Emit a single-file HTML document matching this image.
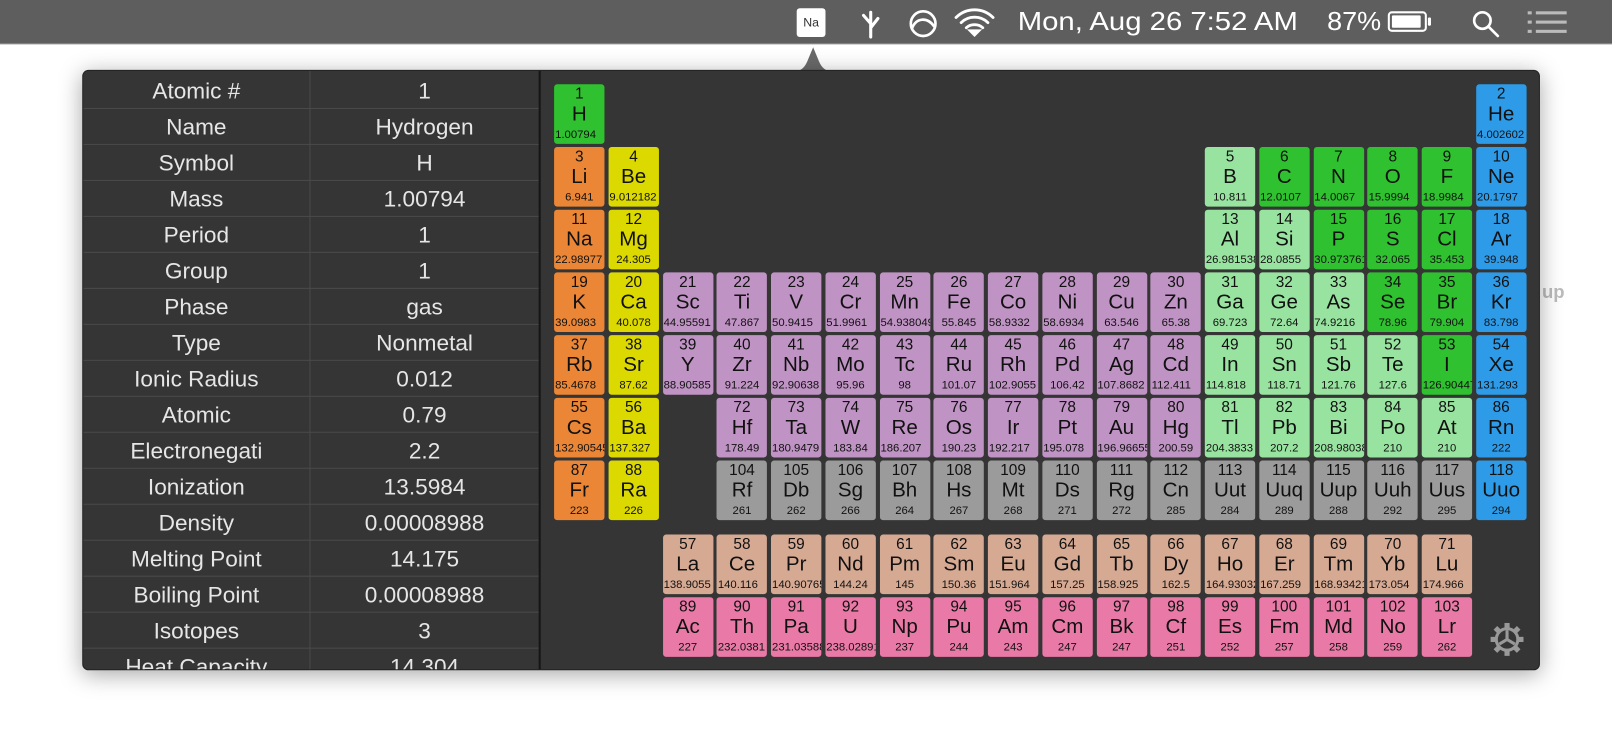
<!DOCTYPE html>
<html><head><meta charset="utf-8"><style>
*{margin:0;padding:0;box-sizing:border-box}
body{width:1612px;height:750px;background:#fff;position:relative;overflow:hidden;font-family:"Liberation Sans",sans-serif}
#wrap{position:absolute;left:0;top:0;width:1568px;height:730px;transform:scale(1.028);transform-origin:0 0}
#bar{position:absolute;left:0;top:0;width:1600px;height:43px;background:#5e5e5e;border-bottom:1px solid #8a8a8a;color:#fff}
#bar .t{position:absolute;top:7px;font-size:25px;white-space:nowrap;transform:scaleX(1.14);transform-origin:0 0}
#panel{position:absolute;left:80px;top:68px;width:1418px;height:584px;background:#353535;border-radius:6px;box-shadow:0 4px 22px rgba(0,0,0,.35);border:1px solid #222;overflow:hidden}
#arrow{position:absolute;left:766px;top:46px;width:50px;height:24px}
.row{position:absolute;left:0;width:443px;height:35px;border-bottom:1px solid #4a4a4a;color:#e6e6e6;font-size:22px}
.row span{position:absolute;top:5px;text-align:center}
.l{left:0;width:220px}.v{left:221px;width:222px}
#vdiv{position:absolute;left:220px;top:0;width:1px;height:584px;background:#4a4a4a}
#sep{position:absolute;left:443px;top:0;width:2px;height:584px;background:#161616}
.c{position:absolute;width:49px;height:58px;border-radius:3px;color:#111;text-align:center;overflow:hidden}
.c .n{position:absolute;top:1px;left:0;width:100%;font-size:15px}
.c .s{position:absolute;top:18px;left:0;width:100%;font-size:20px}
.c .m{position:absolute;top:43px;left:1px;width:200%;font-size:11px;text-align:left;white-space:nowrap}
.c .m.ctr{width:100%;left:0;text-align:center}
</style></head><body>
<div id="wrap">
<div id="bar">
<div style="position:absolute;left:775px;top:8px;width:28px;height:28px;background:#fff;border-radius:3px;color:#333;font-size:12px;text-align:center;line-height:28px">Na</div>
<svg style="position:absolute;left:832px;top:8px" width="30" height="30" viewBox="0 0 30 30" fill="none" stroke="#fff" stroke-width="3" stroke-linecap="round"><path d="M15 4V28M15 15L8 7M15 19L22 10"/></svg>
<svg style="position:absolute;left:882px;top:7px" width="32" height="32" viewBox="0 0 32 32" fill="none" stroke="#fff" stroke-width="2.6"><circle cx="16" cy="16" r="12"/><path d="M5 21C9 10 20 9 27 19"/></svg>
<svg style="position:absolute;left:926px;top:6px" width="44" height="32" viewBox="0 0 44 32" fill="none" stroke="#fff" stroke-width="2.8" stroke-linecap="round"><path d="M4 11C14 1 30 1 40 11M9 16C16 9 28 9 35 16M14 21C18 17 26 17 30 21"/><path d="M22 28l-4-4h8z" fill="#fff"/></svg>
<div class="t" style="left:990px">Mon, Aug 26 7:52 AM</div>
<div class="t" style="left:1291px;transform:scaleX(1.05)">87%</div>
<div style="position:absolute;left:1350px;top:11px;width:38px;height:20px;border:2px solid #fff;border-radius:4px"><div style="position:absolute;left:2px;top:2px;width:28px;height:12px;background:#fff;border-radius:1px"></div></div>
<div style="position:absolute;left:1389px;top:17px;width:3px;height:8px;background:#fff;border-radius:1px"></div>
<svg style="position:absolute;left:1430px;top:8px" width="30" height="30" viewBox="0 0 30 30" fill="none" stroke="#fff" stroke-width="2.6" stroke-linecap="round"><circle cx="12" cy="12" r="8"/><path d="M18 18L27 27"/></svg>
<svg style="position:absolute;left:1486px;top:10px" width="40" height="24" viewBox="0 0 40 24" fill="#bbb"><rect x="0" y="1" width="4" height="3"/><rect x="8" y="1" width="30" height="3"/><rect x="0" y="10" width="4" height="3"/><rect x="8" y="10" width="30" height="3"/><rect x="0" y="19" width="4" height="3"/><rect x="8" y="19" width="30" height="3"/></svg>
</div>
<div style="position:absolute;left:1500px;top:274px;color:#bbb;font-size:18px;font-weight:bold">up</div>
<svg id="arrow" viewBox="0 0 50 24"><path d="M0 24C12 24 16 22 20 12L25 0L30 12C34 22 38 24 50 24Z" fill="#6a6a6a"/></svg>
<div id="panel">
<div id="vdiv"></div>
<div id="rows"></div>
<div id="sep"></div>
<div id="cells"></div>
<svg style="position:absolute;left:1368px;top:536px" width="34" height="34" viewBox="0 0 34 34"><g fill="#999"><circle cx="17" cy="17" r="12"/><rect x="14.5" y="1" width="5" height="6"/><rect x="14.5" y="1" width="5" height="6" transform="rotate(45 17 17)"/><rect x="14.5" y="1" width="5" height="6" transform="rotate(90 17 17)"/><rect x="14.5" y="1" width="5" height="6" transform="rotate(135 17 17)"/><rect x="14.5" y="1" width="5" height="6" transform="rotate(180 17 17)"/><rect x="14.5" y="1" width="5" height="6" transform="rotate(225 17 17)"/><rect x="14.5" y="1" width="5" height="6" transform="rotate(270 17 17)"/><rect x="14.5" y="1" width="5" height="6" transform="rotate(315 17 17)"/></g><circle cx="17" cy="17" r="9" fill="#353535"/><path d="M17 17V8M17 17L9.5 21.5M17 17L24.5 21.5" stroke="#999" stroke-width="3"/></svg>
</div>
</div>
<script>
var rows=[["Atomic #","1"],["Name","Hydrogen"],["Symbol","H"],["Mass","1.00794"],["Period","1"],["Group","1"],["Phase","gas"],["Type","Nonmetal"],["Ionic Radius","0.012"],["Atomic","0.79"],["Electronegati","2.2"],["Ionization","13.5984"],["Density","0.00008988"],["Melting Point","14.175"],["Boiling Point","0.00008988"],["Isotopes","3"],["Heat Capacity","14.304"]];
var h="";rows.forEach(function(r,i){h+='<div class="row" style="top:'+(i*35+2)+'px"><span class="l">'+r[0]+'</span><span class="v">'+r[1]+'</span></div>';});
document.getElementById("rows").innerHTML=h;
var C={g:"#2fc12f",o:"#ea8636",y:"#dcd900",p:"#bf93c3",l:"#99e3a0",b:"#2e9be8",x:"#9b9b9b",t:"#d6a993",k:"#e979a6"};
var E=[[1,"H","1.00794",1,1,"g"],[2,"He","4.002602",18,1,"b"],
[3,"Li","6.941",1,2,"o"],[4,"Be","9.012182",2,2,"y"],[5,"B","10.811",13,2,"l"],[6,"C","12.0107",14,2,"g"],[7,"N","14.0067",15,2,"g"],[8,"O","15.9994",16,2,"g"],[9,"F","18.9984",17,2,"g"],[10,"Ne","20.1797",18,2,"b"],
[11,"Na","22.98977",1,3,"o"],[12,"Mg","24.305",2,3,"y"],[13,"Al","26.981538",13,3,"l"],[14,"Si","28.0855",14,3,"l"],[15,"P","30.973761",15,3,"g"],[16,"S","32.065",16,3,"g"],[17,"Cl","35.453",17,3,"g"],[18,"Ar","39.948",18,3,"b"]];
var p4=[["K","39.0983","o"],["Ca","40.078","y"],["Sc","44.95591","p"],["Ti","47.867","p"],["V","50.9415","p"],["Cr","51.9961","p"],["Mn","54.938049","p"],["Fe","55.845","p"],["Co","58.9332","p"],["Ni","58.6934","p"],["Cu","63.546","p"],["Zn","65.38","p"],["Ga","69.723","l"],["Ge","72.64","l"],["As","74.9216","l"],["Se","78.96","g"],["Br","79.904","g"],["Kr","83.798","b"]];
p4.forEach(function(e,i){E.push([19+i,e[0],e[1],i+1,4,e[2]])});
var p5=[["Rb","85.4678","o"],["Sr","87.62","y"],["Y","88.90585","p"],["Zr","91.224","p"],["Nb","92.90638","p"],["Mo","95.96","p"],["Tc","98","p"],["Ru","101.07","p"],["Rh","102.9055","p"],["Pd","106.42","p"],["Ag","107.8682","p"],["Cd","112.411","p"],["In","114.818","l"],["Sn","118.71","l"],["Sb","121.76","l"],["Te","127.6","l"],["I","126.90447","g"],["Xe","131.293","b"]];
p5.forEach(function(e,i){E.push([37+i,e[0],e[1],i+1,5,e[2]])});
E.push([55,"Cs","132.90545",1,6,"o"],[56,"Ba","137.327",2,6,"y"],[87,"Fr","223",1,7,"o"],[88,"Ra","226",2,7,"y"]);
var p6=[["Hf","178.49","p"],["Ta","180.9479","p"],["W","183.84","p"],["Re","186.207","p"],["Os","190.23","p"],["Ir","192.217","p"],["Pt","195.078","p"],["Au","196.96655","p"],["Hg","200.59","p"],["Tl","204.3833","l"],["Pb","207.2","l"],["Bi","208.98038","l"],["Po","210","l"],["At","210","l"],["Rn","222","b"]];
p6.forEach(function(e,i){E.push([72+i,e[0],e[1],i+4,6,e[2]])});
var p7=[["Rf","261"],["Db","262"],["Sg","266"],["Bh","264"],["Hs","267"],["Mt","268"],["Ds","271"],["Rg","272"],["Cn","285"],["Uut","284"],["Uuq","289"],["Uup","288"],["Uuh","292"],["Uus","295"],["Uuo","294"]];
p7.forEach(function(e,i){E.push([104+i,e[0],e[1],i+4,7,i==14?"b":"x"])});
var la=[["La","138.9055"],["Ce","140.116"],["Pr","140.90765"],["Nd","144.24"],["Pm","145"],["Sm","150.36"],["Eu","151.964"],["Gd","157.25"],["Tb","158.925"],["Dy","162.5"],["Ho","164.93032"],["Er","167.259"],["Tm","168.93421"],["Yb","173.054"],["Lu","174.966"]];
la.forEach(function(e,i){E.push([57+i,e[0],e[1],i+3,8,"t"])});
var ac=[["Ac","227"],["Th","232.0381"],["Pa","231.03588"],["U","238.02891"],["Np","237"],["Pu","244"],["Am","243"],["Cm","247"],["Bk","247"],["Cf","251"],["Es","252"],["Fm","257"],["Md","258"],["No","259"],["Lr","262"]];
ac.forEach(function(e,i){E.push([89+i,e[0],e[1],i+3,9,"k"])});
var tops=[0,13,74,135,196,257,318,379,451,512];
var s="";E.forEach(function(e){var x=458+(e[3]-1)*52.75,y=tops[e[4]];var ctr=e[2].length<=6;
s+='<div class="c" style="left:'+x.toFixed(1)+'px;top:'+y+'px;background:'+C[e[5]]+'"><div class="n">'+e[0]+'</div><div class="s">'+e[1]+'</div><div class="m'+(ctr?' ctr':'')+'">'+e[2]+'</div></div>';});
document.getElementById("cells").innerHTML=s;
</script>
</body></html>
